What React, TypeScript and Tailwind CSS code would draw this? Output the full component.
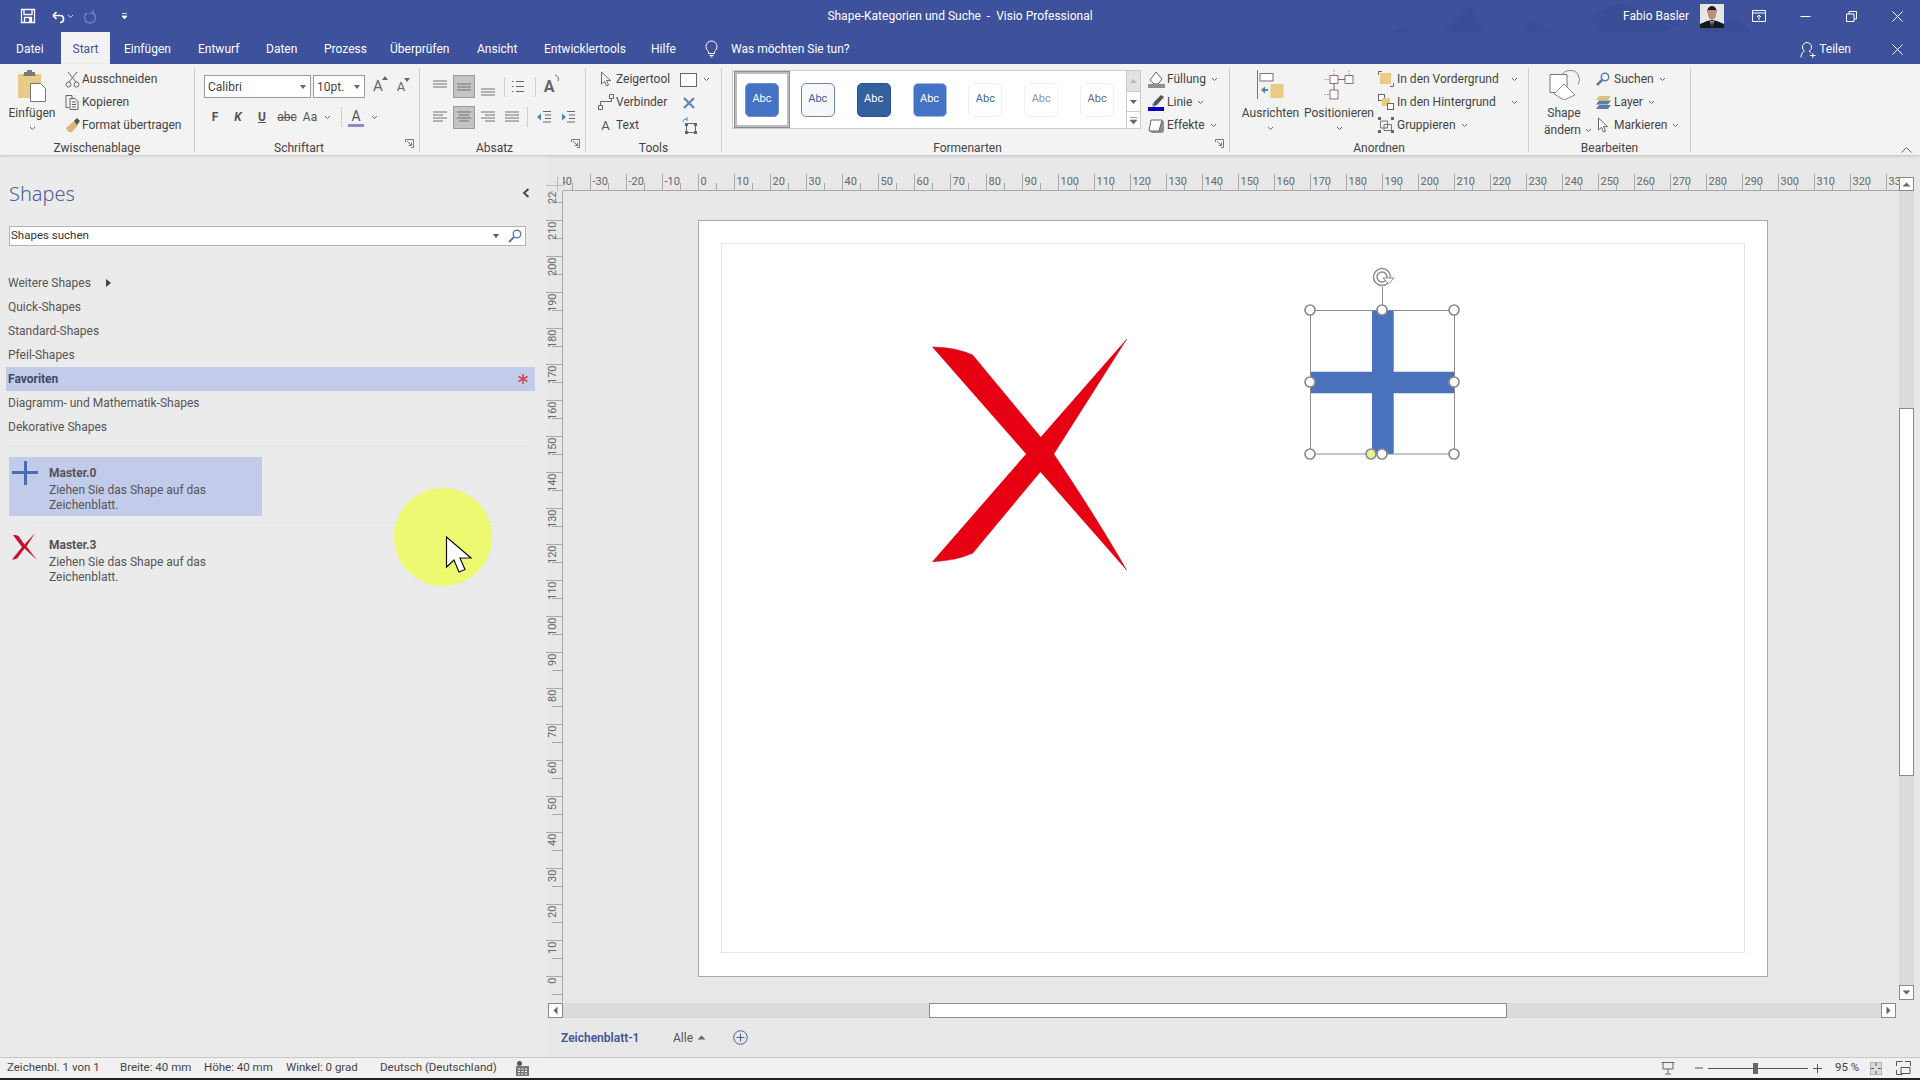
import React from "react";

const Chev = ({ c = "#666" }: { c?: string }) => (
  <svg width="7" height="5" viewBox="0 0 7 5" className="shrink-0"><path d="M1 1l2.5 2.5L6 1" fill="none" stroke={c} strokeWidth="1" /></svg>
);
const Ico = ({ w = 16, h = 16, children }: { w?: number; h?: number; children: React.ReactNode }) => (
  <svg width={w} height={h} viewBox={`0 0 ${w} ${h}`} className="shrink-0">{children}</svg>
);
const Lines = ({ ys, xs }: { ys: number[]; xs: [number, number][] }) => (
  <Ico w={16} h={16}>
    {ys.map((y, i) => (<line key={i} x1={xs[i][0]} x2={xs[i][1]} y1={y} y2={y} stroke="#707070" strokeWidth="1" />))}
  </Ico>
);
const Launcher = () => (
  <span className="absolute right-[5px] top-[-1px] block">
    <Ico w={9} h={9}><path d="M.5 3V.5H8.500V8.500H6M2 2l4.500 4.500M3.500 6.500h3v-3" fill="none" stroke="#777" strokeWidth="1" /></Ico>
  </span>
);
const Group = ({ cls, inner = "", label, launcher, children }: { cls: string; inner?: string; label: string; launcher?: boolean; children: React.ReactNode }) => (
  <div className={`${cls} h-[84px] shrink-0 border-r border-[#cfcfcf] flex flex-col`}>
    <div className={`h-[72px] flex ${inner}`}>{children}</div>
    <div className={`relative h-[12px] leading-[16px] text-center text-[12px] text-[#444] ${launcher ? "pr-[16px]" : ""}`}>
      {label}
      {launcher && <Launcher />}
    </div>
  </div>
);
const Row = ({ icon, iconCls = "w-[17px]", text, chev, textCls = "" }: { icon: React.ReactNode; iconCls?: string; text: string; chev?: boolean; textCls?: string }) => (
  <div className="h-[23px] pb-[1px] flex items-center text-[12px] text-[#444] whitespace-nowrap">
    <span className={`${iconCls} flex justify-center shrink-0`}>{icon}</span>
    <span className={`${textCls} ml-[1px]`}>{text}</span>
    {chev && <span className="ml-[5px]"><Chev /></span>}
  </div>
);
const Big = ({ cls, icon, l1, l2 }: { cls: string; icon: React.ReactNode; l1: string; l2?: string }) => (
  <div className={`${cls} flex flex-col items-center text-[12px] text-[#444] shrink-0`}>
    <div className="h-[36px] pt-[2px] flex justify-center">{icon}</div>
    <div className="h-[18px] leading-[18px] whitespace-nowrap">{l1}</div>
    {l2 ? (
      <div className="h-[16px] leading-[16px] flex items-center gap-[4px] whitespace-nowrap pl-[8px]">{l2}<Chev /></div>
    ) : (
      <div className="h-[12px] flex items-center"><Chev /></div>
    )}
  </div>
);

const Pointer = () => (
  <Ico w={12} h={17}><path d="M1.500 1v12l3-2.700 2 4.700 2-.9-2-4.500h4z" fill="#fff" stroke="#666" strokeWidth="1" /></Ico>
);
const Thumb = ({ cls, tc }: { cls: string; tc: string }) => (
  <div className={`w-[34px] h-[34px] rounded-[5px] flex items-center justify-center text-[11px] ${cls} ${tc}`}>Abc</div>
);
const UpTri = () => <Ico w={9} h={5}><path d="M.5 4.500L4.500.5l4 4z" fill="#666" /></Ico>;

const tabs: [string, string][] = [
  ["Datei", "w-[61px] pl-[16px]"],
  ["Start", "w-[49px] justify-center bg-[#f3f3f3] text-[#3d519c]"],
  ["Einfügen", "w-[88px] pl-[14px]"],
  ["Entwurf", "w-[68px]"],
  ["Daten", "w-[58px]"],
  ["Prozess", "w-[66px]"],
  ["Überprüfen", "w-[87px]"],
  ["Ansicht", "w-[67px]"],
  ["Entwicklertools", "w-[107px]"],
  ["Hilfe", "w-[54px]"],
];
const listItems = ["Weitere Shapes", "Quick-Shapes", "Standard-Shapes", "Pfeil-Shapes", "Favoriten", "Diagramm- und Mathematik-Shapes", "Dekorative Shapes"];

const hTicks = Array.from({ length: 75 }, (_, i) => -40 + i * 5);
const vTicks = Array.from({ length: 46 }, (_, i) => -5 + i * 5);

const MiniCross = () => (
  <Ico w={26} h={24}><path d="M12 0h3v10h11v3H15v11h-3V13H0v-3h12z" fill="#4d6bb0" /></Ico>
);
const MiniX = () => (
  <Ico w={25} h={27}><path d="M1 2c3 0 4.500 .5 5.500 1l6 8.500L23 0 14.500 13.500 25 27 12.500 15.500 5 25.500c-1 .5-3 1-5 1L10 14z" fill="#c8102e" /></Ico>
);
const MasterCard = ({ cls, icon, name }: { cls: string; icon: React.ReactNode; name: string }) => (
  <div className={`${cls} flex text-[12px] text-[#555] leading-[15px]`}>
    <div className="w-[40px] pl-[3px] shrink-0 pt-[4px]">{icon}</div>
    <div className="pt-[9px]">
      <div className="font-bold text-[#555] mb-[2px]">{name}</div>
      <div>Ziehen Sie das Shape auf das</div>
      <div>Zeichenblatt.</div>
    </div>
  </div>
);

export default function App() {
  return (
    <div className="w-[1920px] h-[1080px] overflow-hidden flex flex-col bg-[#ebebeb] [font-family:Roboto,sans-serif] relative">
      {/* Title bar */}
      <div className="h-[32px] bg-[#3d519c] grid grid-cols-[1fr_auto_1fr] items-center text-white text-[12px] relative shrink-0">
        <div className="flex items-center pl-[20px]">
          <Ico w={16} h={16}><path d="M1.500 1.500h13v13h-13zM4 1.500v5h8v-5M4.500 14.500v-5h7v5M9 11h1.500v2H9" fill="none" stroke="#fff" strokeWidth="1.300" /></Ico>
          <span className="ml-[14px]"><Ico w={15} h={15}><path d="M3 6.500h7c2.500 0 3.500 2 3.500 3.500s-1 3.500-3.500 3.500M3 6.500L6.500 3M3 6.500L6.500 10" fill="none" stroke="#fff" strokeWidth="1.700" /></Ico></span>
          <span className="ml-[2px]"><Chev c="#cfd6ee" /></span>
          <span className="ml-[9px]"><Ico w={14} h={15}><path d="M10 4a5.500 5.500 0 1 1-6 0M10 1v3.500H6.500" fill="none" stroke="#6f82c4" strokeWidth="1.500" /></Ico></span>
          <span className="ml-[24px]"><Ico w={7} h={8}><path d="M1 1.500h5M1 4l2.500 3L6 4z" fill="#fff" stroke="#fff" strokeWidth=".8" /></Ico></span>
        </div>
        <div className="whitespace-pre z-10">Shape-Kategorien und Suche  -  Visio Professional</div>
        <div className="flex items-center justify-end z-10">
          <span className="whitespace-nowrap">Fabio Basler</span>
          <svg width="24" height="24" viewBox="0 0 24 24" className="ml-[11px] shrink-0">
            <rect width="24" height="24" fill="#e6e6e6" />
            <path d="M0 24v-4l7-3 5-1 5 1 7 3v4z" fill="#16181c" />
            <path d="M10 17l2 7 2-7z" fill="#d8d8d8" />
            <ellipse cx="12" cy="10" rx="4.200" ry="5.500" fill="#c08e72" />
            <path d="M7.500 9c-.5-5 2-7 4.500-7s5 2 4.500 7l-1-3H8.500z" fill="#1d1a18" />
            <path d="M11.500 17l1 0 .5 7h-2z" fill="#222" />
          </svg>
          <div className="w-[47px] ml-[11px] flex justify-center">
            <Ico w={14} h={12}><path d="M.5.5h13v11H.5zM.5 3h13M7 10V5M5 7l2-2 2 2" fill="none" stroke="#fff" strokeWidth="1" /></Ico>
          </div>
          <div className="w-[46px] flex justify-center"><Ico w={11} h={11}><path d="M.5 5.500h10" stroke="#fff" /></Ico></div>
          <div className="w-[46px] flex justify-center"><Ico w={11} h={11}><path d="M.5 3h7.500v7.500H.5zM3 3V.5h7.500V8H8" fill="none" stroke="#fff" /></Ico></div>
          <div className="w-[46px] flex justify-center"><Ico w={11} h={11}><path d="M.5.5l10 10M10.500.5l-10 10" stroke="#fff" /></Ico></div>
        </div>
        <svg width="420" height="64" viewBox="0 0 420 64" className="absolute right-[120px] top-0 pointer-events-none">
          <path d="M60 35l30-30 20 40-25 18zM5 35l20-10 10 15zM150 20l30 15-20 25-25-8zM210 15l30-12 60 20-40 25-20 12-15-20zM320 30l40-10 30 35-40 8z" fill="#3a4e97" />
        </svg>
      </div>
      {/* Tabs */}
      <div className="h-[32px] bg-[#3d519c] flex items-stretch text-white text-[12px] shrink-0 relative z-10">
        {tabs.map(([t, c]) => (
          <div key={t} className={`flex items-center whitespace-nowrap pt-[2px] ${c}`}>{t}</div>
        ))}
        <div className="flex items-center gap-[13px] pt-[2px]">
          <Ico w={13} h={18}><path d="M3.500 11.500C2 10 1 8.700 1 6.500a5.500 5.500 0 0 1 11 0c0 2.200-1 3.500-2.500 5v2h-6zM4.500 15.500h4M5.500 17h2" fill="none" stroke="#fff" strokeWidth="1" /></Ico>
          <span className="whitespace-nowrap">Was möchten Sie tun?</span>
        </div>
        <div className="ml-auto flex items-center pt-[2px]">
          <Ico w={16} h={17}><path d="M1 16.500c0-4 2-6 3.500-6.500C3 9 2.500 7.500 2.500 6a4.500 4.500 0 0 1 9 0c0 2-1 3.500-2.500 4.300 .8.300 1.500.7 2 1.200M10 14.500h5.500M12.800 12v5" fill="none" stroke="#fff" strokeWidth="1" /></Ico>
          <span className="ml-[3px] mr-[23px]">Teilen</span>
          <div className="w-[46px] flex justify-center"><Ico w={11} h={11}><path d="M.5.5l10 10M10.500.5l-10 10" stroke="#fff" /></Ico></div>
        </div>
      </div>
      {/* Ribbon */}
      <div className="h-[91px] bg-[#f3f3f3] flex pt-[4px] shrink-0 shadow-[0_1px_3px_rgba(0,0,0,0.18)] relative z-10">
        <Group cls="w-[195px]" label="Zwischenablage">
          <Big cls="w-[64px]" l1="Einfügen" icon={
            <Ico w={28} h={32}>
              <path d="M0 4h23v24H0z" fill="#e8cb87" /><path d="M6 4V2h3V0h5v2h3v2l1 2H5z" fill="#7a7a7a" />
              <path d="M12.500 13.500h10l5 5v13h-15z" fill="#fff" stroke="#777" />
            </Ico>} />
          <div>
            <Row icon={<Ico w={15} h={17}><path d="M3 1l8 10M12 1L4 11" stroke="#666" fill="none" /><circle cx="3.500" cy="13.500" r="2.500" fill="none" stroke="#666" /><circle cx="11.500" cy="13.500" r="2.500" fill="none" stroke="#666" /></Ico>} text="Ausschneiden" />
            <Row icon={<Ico w={15} h={15}><path d="M1 .5h6v3M4 12.500H1V.5M5 3.500h5l3 3v8H5zM7 7h4M7 9.500h4M7 12h4" fill="none" stroke="#666" /></Ico>} text="Kopieren" />
            <Row icon={<Ico w={16} h={16}><path d="M1 11l8-7 4 4-6 7c-3 1-5-1-6-4z" fill="#dcb572" /><path d="M9 4l3-3 3 3-3 4z" fill="#555" /></Ico>} text="Format übertragen" />
          </div>
        </Group>
        <Group cls="w-[225px]" inner="pl-[9px]" label="Schriftart" launcher>
          <div className="pt-[7px]">
            <div className="flex items-center h-[23px]">
              <div className="w-[107px] h-[23px] bg-white border border-[#9a9a9a] flex items-center justify-between pl-[3px] pr-[4px] text-[12px] text-[#444]"><span>Calibri</span><Ico w={6} h={4}><path d="M0 0h6L3 4z" fill="#666" /></Ico></div>
              <div className="w-[52px] h-[23px] ml-[2px] bg-white border border-[#9a9a9a] flex items-center justify-between pl-[3px] pr-[4px] text-[12px] text-[#444]"><span>10pt.</span><Ico w={6} h={4}><path d="M0 0h6L3 4z" fill="#666" /></Ico></div>
              <div className="w-[24px] ml-[1px] text-center text-[15px] text-[#666] relative">A<span className="absolute right-[2px] top-[1px]"><Ico w={6} h={4}><path d="M0 4l3-4 3 4z" fill="#666" /></Ico></span></div>
              <div className="w-[22px] text-center text-[13px] text-[#666] relative">A<span className="absolute right-[2px] top-[1px]"><Ico w={6} h={4}><path d="M0 0h6L3 4z" fill="#666" /></Ico></span></div>
            </div>
            <div className="flex items-center h-[22px] mt-[8px] text-[12px] text-[#555]">
              <div className="w-[22px] text-center font-bold">F</div>
              <div className="w-[24px] text-center font-bold italic">K</div>
              <div className="w-[24px] text-center font-bold underline">U</div>
              <div className="w-[26px] text-center line-through">abc</div>
              <div className="w-[20px] text-center">Aa</div>
              <div className="w-[14px] flex justify-center"><Chev /></div>
              <div className="w-[14px] flex justify-center"><div className="w-px h-[20px] bg-[#d0d0d0]" /></div>
              <div className="w-[16px] text-center text-[14px] leading-[16px] border-b-[3px] border-[#8b8bc8]">A</div>
              <div className="w-[20px] flex justify-center"><Chev /></div>
            </div>
          </div>
        </Group>
        <Group cls="w-[166px]" inner="pl-[9px]" label="Absatz" launcher>
          <div className="pt-[7px]">
            <div className="flex items-center h-[23px]">
              <div className="w-[22px] flex justify-center pb-[6px]"><Lines ys={[5, 8, 11]} xs={[[1, 15], [1, 15], [1, 15]]} /></div>
              <div className="w-[22px] h-[23px] ml-[2px] bg-[#c4c4c4] border border-[#9c9c9c] flex justify-center items-center"><Lines ys={[5, 8, 11]} xs={[[1, 15], [1, 15], [1, 15]]} /></div>
              <div className="w-[22px] ml-[2px] flex justify-center pt-[6px]"><Lines ys={[7, 10, 13]} xs={[[1, 15], [1, 15], [1, 15]]} /></div>
              <div className="w-px h-[20px] ml-[5px] bg-[#d0d0d0]" />
              <div className="w-[26px] flex justify-center"><Ico w={14} h={15}><path d="M1 2.500h1.500M1 7.500h1.500M1 12.500h1.500M5 2.500h8M5 7.500h8M5 12.500h8" stroke="#666" /></Ico></div>
              <div className="w-px h-[20px] ml-[4px] bg-[#d0d0d0]" />
              <div className="w-[26px] text-center text-[16px] font-bold text-[#666] relative">A<span className="absolute right-[2px] top-[-1px]"><Ico w={6} h={8}><path d="M1 1c3 1 4 3 3 6" fill="none" stroke="#666" /></Ico></span></div>
            </div>
            <div className="flex items-center h-[22px] mt-[8px]">
              <div className="w-[22px] flex justify-center"><Lines ys={[3, 6, 9, 12]} xs={[[1, 15], [1, 11], [1, 15], [1, 11]]} /></div>
              <div className="w-[22px] h-[23px] ml-[2px] bg-[#c4c4c4] border border-[#9c9c9c] flex justify-center items-center"><Lines ys={[3, 6, 9, 12]} xs={[[1, 15], [3, 13], [1, 15], [3, 13]]} /></div>
              <div className="w-[22px] ml-[2px] flex justify-center"><Lines ys={[3, 6, 9, 12]} xs={[[1, 15], [5, 15], [1, 15], [5, 15]]} /></div>
              <div className="w-[22px] ml-[2px] flex justify-center"><Lines ys={[3, 6, 9, 12]} xs={[[1, 15], [1, 15], [1, 15], [1, 15]]} /></div>
              <div className="w-px h-[20px] ml-[4px] bg-[#d0d0d0]" />
              <div className="w-[26px] ml-[3px] flex justify-center"><Ico w={16} h={14}><path d="M7 1.500h8M9 5h6M9 8.500h6M7 12h8" stroke="#666" /><path d="M1 7l4-3.500v7z" fill="#4a86b8" /></Ico></div>
              <div className="w-[22px] flex justify-center"><Ico w={16} h={14}><path d="M7 1.500h8M9 5h6M9 8.500h6M7 12h8" stroke="#666" /><path d="M6 7L2 3.500v7z" fill="#4a86b8" /></Ico></div>
            </div>
          </div>
        </Group>
        <Group cls="w-[136px]" inner="pl-[10px]" label="Tools">
          <div>
            <div className="flex items-center">
              <Row icon={<Pointer />} iconCls="w-[19px]" text="Zeigertool" textCls="w-[64px]" />
              <Ico w={17} h={14}><rect x=".5" y=".5" width="16" height="13" fill="#fff" stroke="#666" /></Ico>
              <span className="ml-[6px]"><Chev /></span>
            </div>
            <div className="flex items-center">
              <Row icon={<Ico w={16} h={16}><path d="M.5 11.500h4v4h-4zM11.500.5h4v4h-4zM2.500 11.500V7.500h11v-3" fill="none" stroke="#666" /></Ico>} iconCls="w-[19px]" text="Verbinder" textCls="w-[64px]" />
              <span className="ml-[3px]"><Ico w={12} h={12}><path d="M1 1l10 10M11 1L1 11" stroke="#5b86b8" strokeWidth="2.200" /></Ico></span>
            </div>
            <div className="flex items-center">
              <Row icon={<span className="text-[13px] text-[#555] leading-none">A</span>} iconCls="w-[19px]" text="Text" textCls="w-[64px]" />
              <span className="ml-[2px]"><Ico w={16} h={17}><path d="M4.500 6.500h9v9h-9z" fill="none" stroke="#666" /><path d="M3 6h3v3H3zM12 6h3v3h-3zM3 14h3v3H3zM12 14h3v3h-3z" fill="#666" /><path d="M1 5c0-2 1-3 4-3M5 0v4" fill="none" stroke="#4a86b8" /></Ico></span>
            </div>
          </div>
        </Group>
        <Group cls="w-[508px]" label="Formenarten" launcher>
          <div className="ml-[10px] mt-[2px] w-[409px] h-[59px] bg-white border border-[#cbcbcb] flex shrink-0">
            <div className="w-[56px] h-[57px] border-[3px] border-[#bdbdbd] outline outline-1 outline-[#8e8e8e] -outline-offset-1 flex items-center justify-center ml-[1px]">
              <Thumb cls="bg-[#4472c4] border border-[#6f8fd0]" tc="text-white" />
            </div>
            <div className="w-[56px] flex items-center justify-center"><Thumb cls="bg-[#f6f7fb] border border-[#77849e]" tc="text-[#3f5f9f]" /></div>
            <div className="w-[56px] flex items-center justify-center"><Thumb cls="bg-[#35609f] border border-[#2b4f8f]" tc="text-white" /></div>
            <div className="w-[56px] flex items-center justify-center"><Thumb cls="bg-[#4472c4] border border-[#a4b8e0]" tc="text-white" /></div>
            <div className="w-[56px] flex items-center justify-center"><Thumb cls="bg-white border border-[#f0f0f0]" tc="text-[#46659f]" /></div>
            <div className="w-[56px] flex items-center justify-center"><Thumb cls="bg-white border border-[#f2f2f2]" tc="text-[#8a97a8]" /></div>
            <div className="w-[56px] flex items-center justify-center"><Thumb cls="bg-white border border-[#f0f0f0]" tc="text-[#5d6b80]" /></div>
            <div className="w-[14px] ml-[1px] flex flex-col border-l border-[#cbcbcb]">
              <div className="h-[20px] bg-[#e2e2e2] flex items-center justify-center"><Ico w={7} h={4}><path d="M0 4l3.500-4L7 4z" fill="#bbb" /></Ico></div>
              <div className="h-[20px] border-t border-[#cbcbcb] flex items-center justify-center"><Ico w={7} h={4}><path d="M0 0h7L3.500 4z" fill="#666" /></Ico></div>
              <div className="flex-1 border-t border-[#cbcbcb] flex items-center justify-center"><Ico w={7} h={7}><path d="M0 .5h7M0 3h7L3.500 7z" fill="#666" stroke="#666" strokeWidth=".6" /></Ico></div>
            </div>
          </div>
          <div className="ml-[5px] mt-0 shrink-0">
            <Row icon={<Ico w={17} h={17}><path d="M8 1l6 7-4 5H6L2 9z" fill="#fff" stroke="#666" /><path d="M0 13h17v4H0z" fill="#8f8f8f" /></Ico>} iconCls="w-[20px]" text="Füllung" chev />
            <Row icon={<Ico w={17} h={17}><path d="M13 1l3 2-7 8-4 1 1-4z" fill="#555" /><path d="M4 9l4 3-3 1z" fill="#6a7fc0" /><path d="M0 13h16v4H0z" fill="#0000bb" /></Ico>} iconCls="w-[20px]" text="Linie" chev />
            <Row icon={<Ico w={17} h={17}><rect x="2" y="3" width="14" height="13" rx="3" fill="#8f8f8f" /><path d="M3 3h11L11 14H1z" fill="#fff" stroke="#666" /></Ico>} iconCls="w-[20px]" text="Effekte" chev />
          </div>
        </Group>
        <Group cls="w-[299px]" inner="pl-[9px]" label="Anordnen">
          <Big cls="w-[63px]" l1="Ausrichten" icon={
            <Ico w={27} h={29}>
              <path d="M.5 0v29" stroke="#777" /><rect x="3" y="3.500" width="13" height="7.500" fill="#fff" stroke="#777" />
              <path d="M4 20l4-3.500v2.500h3v2H8v2.500z" fill="#4a86b8" /><rect x="13.500" y="14" width="13" height="14" fill="#e8cb87" />
            </Ico>} />
          <Big cls="w-[74px]" l1="Positionieren" icon={
            <Ico w={30} h={30}>
              <path d="M6 5.500h8v8H6zM21 5.500h8v8h-8zM6 20h8v9H6z" fill="#fff" stroke="#8a7070" />
              <path d="M14 9.500h7M10 13.500V20" stroke="#a05a50" />
              <path d="M10 0v5M25 0v5M0 9.500h6M0 24.500h6" stroke="#aaa" strokeDasharray="2 1" />
            </Ico>} />
          <div>
            <div className="flex items-center"><Row icon={<Ico w={16} h={16}><path d="M.5 4V.5H4M15.500 12v3.500H12" fill="none" stroke="#666" /><rect x="2" y="2" width="11" height="11" fill="#e8cb87" /></Ico>} iconCls="w-[20px]" text="In den Vordergrund" textCls="w-[114px]" /><Chev /></div>
            <div className="flex items-center"><Row icon={<Ico w={16} h={16}><rect x=".5" y=".5" width="6" height="6" fill="#fff" stroke="#666" /><rect x="4" y="4" width="8" height="8" fill="#e8cb87" /><rect x="9.500" y="9.500" width="6" height="6" fill="#fff" stroke="#666" /></Ico>} iconCls="w-[20px]" text="In den Hintergrund" textCls="w-[114px]" /><Chev /></div>
            <Row icon={<Ico w={16} h={16}><path d="M2.500 4h7v7h-7zM6 7.500h7.500v6H6z" fill="none" stroke="#777" /><path d="M0 0h3v3H0zM13 0h3v3h-3zM0 13h3v3H0zM13 13h3v3h-3z" fill="#666" /></Ico>} iconCls="w-[20px]" text="Gruppieren" chev />
          </div>
        </Group>
        <Group cls="w-[162px]" inner="pl-[6px]" label="Bearbeiten">
          <Big cls="w-[58px]" l1="Shape" l2="ändern" icon={
            <Ico w={31} h={30}>
              <path d="M1 4.500h17v18H1z" fill="#fff" stroke="#777" />
              <path d="M13 4.500C15 1.500 18 .5 21 .5a9 9 0 0 1 8 14" fill="none" stroke="#888" />
              <path d="M15 14l11 11-11 5L5 24z" fill="#fff" stroke="#888" />
            </Ico>} />
          <div>
            <Row icon={<Ico w={14} h={15}><circle cx="9" cy="5" r="3.700" fill="#fff" stroke="#5a7ea3" strokeWidth="1.500" /><path d="M6 8l-5 5" stroke="#5a7ea3" strokeWidth="2.500" /></Ico>} iconCls="w-[20px]" text="Suchen" chev />
            <Row icon={<Ico w={15} h={15}><path d="M3 1h12l-3 4H0z" fill="#dcc07c" /><path d="M3 5.500h12l-3 4H0z" fill="#5d7ea1" /><path d="M3 10h12l-3 4H0z" fill="#5d7ea1" /></Ico>} iconCls="w-[20px]" text="Layer" chev />
            <Row icon={<Pointer />} iconCls="w-[20px]" text="Markieren" chev />
          </div>
        </Group>
        <div className="flex-1 h-[87px] flex items-end justify-end pr-[8px] pb-[2px]">
          <Ico w={11} h={6}><path d="M.5 5.500l5-5 5 5" fill="none" stroke="#666" /></Ico>
        </div>
      </div>
      {/* Main */}
      <div className="flex-1 flex min-h-0">
        <div className="w-[546px] shrink-0 flex flex-col bg-[#ebebeb]">
          <div className="h-[71px] pt-[21px] px-[9px] flex justify-between shrink-0">
            <span className="text-[20px] leading-[36px] font-light text-[#4d5f99] [font-family:'Noto_Sans',sans-serif]">Shapes</span>
            <span className="pt-[12px] pr-[7px]"><Ico w={8} h={10}><path d="M6.500 1L2 5l4.500 4" fill="none" stroke="#444" strokeWidth="1.800" /></Ico></span>
          </div>
          <div className="ml-[9px] w-[517px] h-[20px] bg-white border border-[#b4b4b4] flex items-center pl-[1px] pr-[3px] pb-[1px] text-[11.500px] text-[#333] shrink-0">
            <span className="flex-1">Shapes suchen</span>
            <Ico w={6} h={4}><path d="M0 0h6L3 4z" fill="#555" /></Ico>
            <span className="ml-[9px]"><Ico w={14} h={14}><circle cx="9" cy="5" r="3.800" fill="#fff" stroke="#5a7ea3" strokeWidth="1.400" /><path d="M6 8l-5 5" stroke="#5a7ea3" strokeWidth="2.200" /></Ico></span>
          </div>
          <div className="mt-[25px] ml-[6px] mr-[11px] flex flex-col shrink-0 pb-[7px] border-b border-[#e4e4e4]">
            {listItems.map((t, i) => (
              <div key={t} className={`h-[24px] flex items-center pl-[2px] text-[12px] whitespace-nowrap ${i === 4 ? "bg-[#c3cbea] font-bold text-[#3f4a66] justify-between pr-[6px]" : "text-[#555]"}`}>
                <span>{t}</span>
                {i === 0 && <span className="ml-[15px]"><Ico w={5} h={8}><path d="M0 0l5 4-5 4z" fill="#444" /></Ico></span>}
                {i === 4 && <Ico w={12} h={12}><path d="M6 1v10M1.500 3.500l9 5M10.500 3.500l-9 5" stroke="#d0485a" strokeWidth="1.600" /></Ico>}
              </div>
            ))}
          </div>
          <MasterCard cls="ml-[9px] mt-[10px] w-[253px] h-[59px] bg-[#c3cbea] shrink-0" icon={<MiniCross />} name="Master.0" />
          <div className="ml-[30px] mr-[50px] mt-[6px] h-px bg-[#e4e4e4] shrink-0" />
          <MasterCard cls="ml-[9px] mt-[6px] w-[253px] h-[59px] shrink-0" icon={<MiniX />} name="Master.3" />
        </div>
        <div className="flex-1 flex flex-col bg-[#e8e8e8] min-w-0">
          <div className="h-[847px] flex shrink-0">
            <div className="flex-1 min-w-0 flex flex-col">
              <div className="h-[17px] shrink-0" />
              <div className="h-[19px] flex shrink-0">
                <svg width="17" height="19" viewBox="0 0 17 19" className="shrink-0"><path d="M0 13.500h17M11.500 5v14" stroke="#bbb" /></svg>
                <svg width="1336" height="19" viewBox="563 172 1336 19" className="shrink-0">
                  <path d="M563 190.500H1899" stroke="#a8a8a8" />
                  {hTicks.map((v) => {
                    const x = Math.round(698 + 3.6 * v) + 0.5;
                    const long = v % 10 === 0;
                    return (
                      <React.Fragment key={v}>
                        <line x1={x} x2={x} y1={long ? 174 : 183} y2={190} stroke="#a8a8a8" />
                        {long && <text x={x + 2} y={185} fontSize="11" fill="#666">{v}</text>}
                      </React.Fragment>
                    );
                  })}
                </svg>
              </div>
              <div className="flex-1 flex min-h-0">
                <svg width="17" height="811" viewBox="546 191 17 811" className="shrink-0">
                  <path d="M562.500 191V1002" stroke="#a8a8a8" />
                  {vTicks.map((v) => {
                    const y = Math.round(976 - 3.6 * v) + 0.5;
                    const long = v % 10 === 0;
                    return (
                      <React.Fragment key={v}>
                        <line x1={long ? 546 : 552} x2={562} y1={y} y2={y} stroke="#a8a8a8" />
                        {long && <text x={556} y={y + 1} fontSize="11" fill="#666" textAnchor="end" transform={`rotate(-90 556 ${y + 1})`}>{v}</text>}
                      </React.Fragment>
                    );
                  })}
                </svg>
                <div className="flex-1 min-w-0 pl-[135px] pt-[29px]">
                  <div className="w-[1070px] h-[757px] bg-white border border-[#a9a9a9] relative pl-[22px] pt-[22px]">
                    <div className="w-[1024px] h-[710px] border border-[#e6e6e6]" />
                    <svg width="1070" height="757" viewBox="698 220 1070 757" className="absolute left-[-1px] top-[-1px]">
                      <path d="M932.500 347Q955 347 972.700 355L1040.800 437.300L1126.600 339.300Q1085 405 1053.800 454Q1095 515 1126.600 570L1040.400 471.700L972.700 553.300Q955 561 932.500 561.700L1026.300 454Z" fill="#e60012" stroke="#b8102a" strokeWidth=".5" />
                      <path d="M1372 310.300h21.700v61.400h60.800v21.600h-60.800v60.700h-21.700v-60.700h-61.700v-21.600h61.700z" fill="#4a72bc" />
                      <path d="M1310.500 310.500h144v143.500h-144zM1382.500 287v23" fill="none" stroke="#8c8c8c" />
                      <circle cx="1382" cy="277" r="8.500" fill="none" stroke="#8c8c8c" strokeWidth="1.500" />
                      <circle cx="1382" cy="277" r="5" fill="none" stroke="#8c8c8c" strokeWidth="1.500" />
                      <path d="M1383 278h11l-5.500 6z" fill="#fff" stroke="#8c8c8c" />
                      {[[1310, 310], [1382, 310], [1454, 310], [1310, 382], [1454, 382], [1310, 454], [1382, 454], [1454, 454]].map(([x, y]) => (
                        <circle key={`${x}-${y}`} cx={x} cy={y} r="5" fill="#fff" stroke="#8c8c8c" strokeWidth="1.700" />
                      ))}
                      <circle cx="1371" cy="454" r="5" fill="#ecef98" stroke="#8c8c8c" strokeWidth="1.700" />
                    </svg>
                  </div>
                </div>
              </div>
            </div>
            <div className="w-[15px] mt-[22px] mb-[2px] mr-[6px] shrink-0 bg-[#dcdcdc] flex flex-col">
              <div className="h-[14px] bg-white border border-[#8a8a8a] flex items-center justify-center shrink-0"><UpTri /></div>
              <div className="h-[217px] shrink-0" />
              <div className="h-[368px] bg-white border border-[#8a8a8a] shrink-0" />
              <div className="flex-1" />
              <div className="h-[15px] bg-white border border-[#8a8a8a] flex items-center justify-center shrink-0"><Ico w={9} h={5}><path d="M.5.5h8l-4 4z" fill="#666" /></Ico></div>
            </div>
          </div>
          <div className="h-[15px] ml-[2px] mr-[24px] mt-[1px] bg-[#dcdcdc] flex shrink-0">
            <div className="w-[15px] bg-white border border-[#8a8a8a] flex items-center justify-center shrink-0"><Ico w={5} h={9}><path d="M4.500.5v8l-4-4z" fill="#666" /></Ico></div>
            <div className="w-[366px] shrink-0" />
            <div className="w-[578px] bg-white border border-[#8a8a8a] shrink-0" />
            <div className="flex-1" />
            <div className="w-[15px] bg-white border border-[#8a8a8a] flex items-center justify-center shrink-0"><Ico w={5} h={9}><path d="M.5.5v8l4-4z" fill="#666" /></Ico></div>
          </div>
          <div className="flex-1 flex items-center pl-[15px] text-[12px]">
            <span className="font-semibold text-[#3f5599] w-[112px] whitespace-nowrap">Zeichenblatt-1</span>
            <span className="text-[#555]">Alle</span>
            <span className="ml-[4px]"><UpTri /></span>
            <span className="ml-[27px]"><Ico w={15} h={15}><circle cx="7.500" cy="7.500" r="6.800" fill="none" stroke="#4d5f99" /><path d="M7.500 3.500v8M3.500 7.500h8" stroke="#4d5f99" /></Ico></span>
          </div>
        </div>
      </div>
      {/* Status bar */}
      <div className="h-[21px] shrink-0 bg-[#f1f1f1] border-t border-[#c8c8c8] flex items-center text-[11.500px] text-[#444] whitespace-nowrap pl-[7px]">
        <span className="w-[113px]">Zeichenbl. 1 von 1</span>
        <span className="w-[84px]">Breite: 40 mm</span>
        <span className="w-[82px]">Höhe: 40 mm</span>
        <span className="w-[94px]">Winkel: 0 grad</span>
        <span className="w-[136px]">Deutsch (Deutschland)</span>
        <Ico w={14} h={15}><rect x="1" y="0" width="5" height="5" rx="2.500" fill="#555" /><path d="M0 5h13v10H0z" fill="#777" /><path d="M2 8h2M5.500 8h2M9 8h2M2 10.500h2M5.500 10.500h2M9 10.500h2M2 13h2M5.500 13h2M9 13h2" stroke="#fff" /></Ico>
        <span className="ml-auto"><Ico w={14} h={14}><path d="M.5 1.500h13M2 1.500h10v6.500H2zM7 8v4.500M4 13h6" fill="none" stroke="#666" /></Ico></span>
        <span className="ml-[20px]"><Ico w={8} h={8}><path d="M0 4h8" stroke="#555" /></Ico></span>
        <div className="w-[100px] h-px bg-[#555] ml-[5px] relative"><span className="absolute left-[45px] top-[-5px] w-[5px] h-[11px] bg-[#666]" /></div>
        <span className="ml-[5px]"><Ico w={9} h={9}><path d="M0 4.500h9M4.500 0v9" stroke="#555" /></Ico></span>
        <span className="ml-[13px] w-[30px]">95 %</span>
        <span className="ml-[5px]"><Ico w={12} h={13}><rect width="12" height="13" fill="#dcdcdc" stroke="#888" /><path d="M6 1v3M6 9v3M1 6.500h3M8 6.500h3" stroke="#555" /></Ico></span>
        <span className="ml-[14px] mr-[9px]"><Ico w={15} h={14}><path d="M0.500 5V.5h6M9 .5h5.500V5M.5 9v4.500h6M5 6.500h9v6H5z" fill="none" stroke="#555" /></Ico></span>
      </div>
      <div className="h-[2px] bg-[#222] shrink-0" />
      {/* Presenter spotlight and pointer over the page */}
      <div className="absolute left-[394px] top-[488px] w-[98px] h-[98px] rounded-full bg-[#eef972]" />
      <svg width="28" height="38" viewBox="0 0 28 38" className="absolute left-[445px] top-[536px]">
        <path d="M1.500 1v30l7.500-7 5 12 6-2.500-5-11.500h11z" fill="#fff" stroke="#111" strokeWidth="1.200" />
      </svg>
    </div>
  );
}
